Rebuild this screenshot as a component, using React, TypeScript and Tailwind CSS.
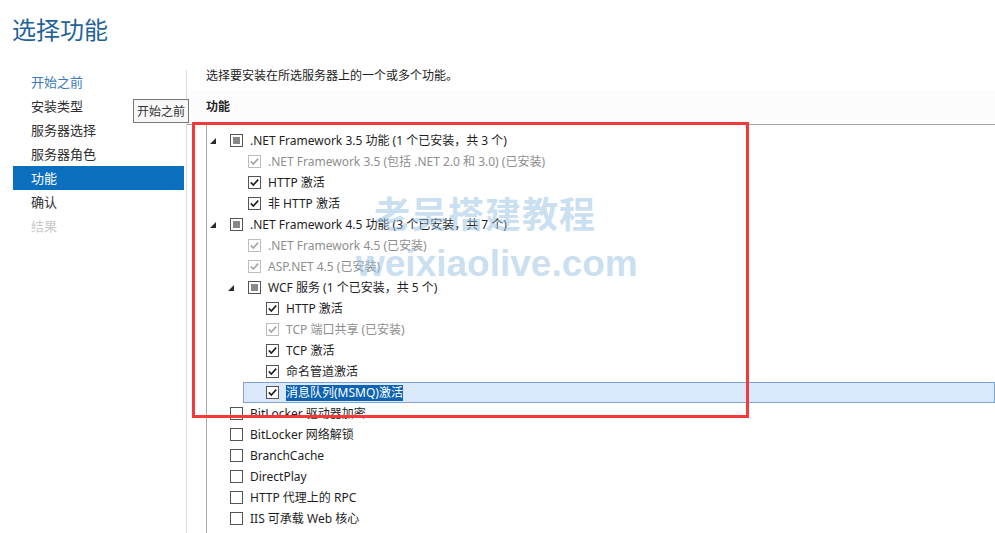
import React from "react";

type State = "indet" | "checked" | "disabled" | "empty";
type Row = { level: 0 | 1 | 2; expand?: boolean; state: State; text: string; selected?: boolean };

const rows: Row[] = [
  { level: 0, expand: true, state: "indet", text: ".NET Framework 3.5 功能 (1 个已安装，共 3 个)" },
  { level: 1, state: "disabled", text: ".NET Framework 3.5 (包括 .NET 2.0 和 3.0) (已安装)" },
  { level: 1, state: "checked", text: "HTTP 激活" },
  { level: 1, state: "checked", text: "非 HTTP 激活" },
  { level: 0, expand: true, state: "indet", text: ".NET Framework 4.5 功能 (3 个已安装，共 7 个)" },
  { level: 1, state: "disabled", text: ".NET Framework 4.5 (已安装)" },
  { level: 1, state: "disabled", text: "ASP.NET 4.5 (已安装)" },
  { level: 1, expand: true, state: "indet", text: "WCF 服务 (1 个已安装，共 5 个)" },
  { level: 2, state: "checked", text: "HTTP 激活" },
  { level: 2, state: "disabled", text: "TCP 端口共享 (已安装)" },
  { level: 2, state: "checked", text: "TCP 激活" },
  { level: 2, state: "checked", text: "命名管道激活" },
  { level: 2, state: "checked", text: "消息队列(MSMQ)激活", selected: true },
  { level: 0, state: "empty", text: "BitLocker 驱动器加密" },
  { level: 0, state: "empty", text: "BitLocker 网络解锁" },
  { level: 0, state: "empty", text: "BranchCache" },
  { level: 0, state: "empty", text: "DirectPlay" },
  { level: 0, state: "empty", text: "HTTP 代理上的 RPC" },
  { level: 0, state: "empty", text: "IIS 可承载 Web 核心" },
  { level: 0, state: "empty", text: "Internet 打印客户端" },
];

const padByLevel: Record<number, string> = {
  0: "pl-[3px]",
  1: "pl-[21px]",
  2: "pl-[39px]",
};

function Check({ state }: { state: State }) {
  const disabled = state === "disabled";
  const border = disabled ? "#bdbdbd" : "#545454";
  return (
    <svg width="13" height="13" viewBox="0 0 13 13" className="shrink-0">
      <rect x="0.5" y="0.5" width="12" height="12" fill="#ffffff" stroke={border} />
      {state === "indet" && <rect x="3" y="3" width="7" height="7" fill="#888888" />}
      {(state === "checked" || disabled) && (
        <path
          d="M2.8 6.4 L5.3 9 L10.2 3.6"
          fill="none"
          stroke={disabled ? "#a6a6a6" : "#1f1f1f"}
          strokeWidth="1.6"
        />
      )}
    </svg>
  );
}

function Expander() {
  return (
    <svg width="6" height="6" viewBox="0 0 6 6" className="mt-[4px]">
      <polygon points="0,6 6,6 6,0" fill="#2b2b2b" />
    </svg>
  );
}

function TreeRow({ row }: { row: Row }) {
  const textCls = row.state === "disabled" ? "text-[#8e8e8e]" : "text-[#1e1e1e]";
  if (row.selected) {
    return (
      <div className="h-[21px] ml-[36px] flex items-center bg-[#dae8fc] border border-[#7ea4d4] pl-[22px]">
        <Check state={row.state} />
        <span className="ml-[7px] bg-[#0d63b0] text-white leading-[16px] whitespace-nowrap">{row.text}</span>
      </div>
    );
  }
  return (
    <div className={`h-[21px] flex items-center ${padByLevel[row.level]}`}>
      <div className="w-[20px] h-[13px] flex items-start shrink-0">{row.expand && <Expander />}</div>
      <Check state={row.state} />
      <span className={`ml-[7px] whitespace-nowrap ${textCls}`}>{row.text}</span>
    </div>
  );
}

const navItems = [
  { t: "开始之前", c: "text-[#3a78c2]" },
  { t: "安装类型", c: "text-[#2e2e2e]" },
  { t: "服务器选择", c: "text-[#2e2e2e]" },
  { t: "服务器角色", c: "text-[#2e2e2e]" },
  { t: "功能", c: "text-white bg-[#0a6fbe]" },
  { t: "确认", c: "text-[#2e2e2e]" },
  { t: "结果", c: "text-[#c9c9c9]" },
];

export default function App() {
  return (
    <div
      className="relative w-[995px] h-[533px] bg-white overflow-hidden"
      style={{ fontFamily: '"Noto Sans", "Noto Sans CJK SC", sans-serif' }}
    >
      <div className="h-[70px] pl-[12px] pt-[11px]">
        <div className="text-[24px] leading-[36px] text-[#21629c]" style={{ fontFamily: '"Noto Sans CJK SC", sans-serif' }}>
          选择功能
        </div>
      </div>
      <div className="flex h-[463px]">
        <div className="w-[186px] shrink-0 pl-[13px] pr-[2px]" style={{ fontFamily: '"Noto Sans CJK SC", sans-serif' }}>
          {navItems.map((n) => (
            <div key={n.t} className={`h-[24px] leading-[24px] pl-[18px] text-[13px] ${n.c}`}>
              {n.t}
            </div>
          ))}
        </div>
        <div className="flex-1 border-l border-[#dadada] text-[12px]">
          <div className="h-[20px] pl-[19px] leading-[12px] text-[#222222]">选择要安装在所选服务器上的一个或多个功能。</div>
          <div className="h-[35px] pl-[19px] flex items-center bg-[#fcfcfc] border-b border-[#a6a6a6] font-bold text-[#1e1e1e]">
            功能
          </div>
          <div className="ml-[19px] border-l border-[#a9a9a9] h-full pt-[5px] leading-[16px]">
            {rows.map((r, i) => (
              <TreeRow key={i} row={r} />
            ))}
          </div>
        </div>
      </div>

      {/* tooltip */}
      <div
        className="absolute left-[133px] top-[99px] w-[56px] h-[24px] border border-[#767676] bg-[#f7f7f7] text-[12px] text-[#333333] flex items-center justify-center"
        style={{ fontFamily: '"Noto Sans CJK SC", sans-serif' }}
      >
        开始之前
      </div>

      {/* red annotation */}
      <div className="absolute left-[192px] top-[122px] w-[557px] h-[296px] border-[3px] border-[#f23a3a] pointer-events-none" />

      {/* watermark */}
      <div
        className="absolute left-[374px] top-[190px] text-[36px] font-bold leading-[44px] text-[rgba(150,192,226,0.5)] tracking-[1px] pointer-events-none"
        style={{ fontFamily: '"Noto Sans CJK SC", sans-serif' }}
      >
        老吴搭建教程
      </div>
      <div
        className="absolute left-[356px] top-[242px] text-[37px] font-bold leading-[44px] text-[rgba(150,192,226,0.5)] pointer-events-none"
        style={{ fontFamily: '"Liberation Sans", sans-serif' }}
      >
        weixiaolive.com
      </div>
    </div>
  );
}
